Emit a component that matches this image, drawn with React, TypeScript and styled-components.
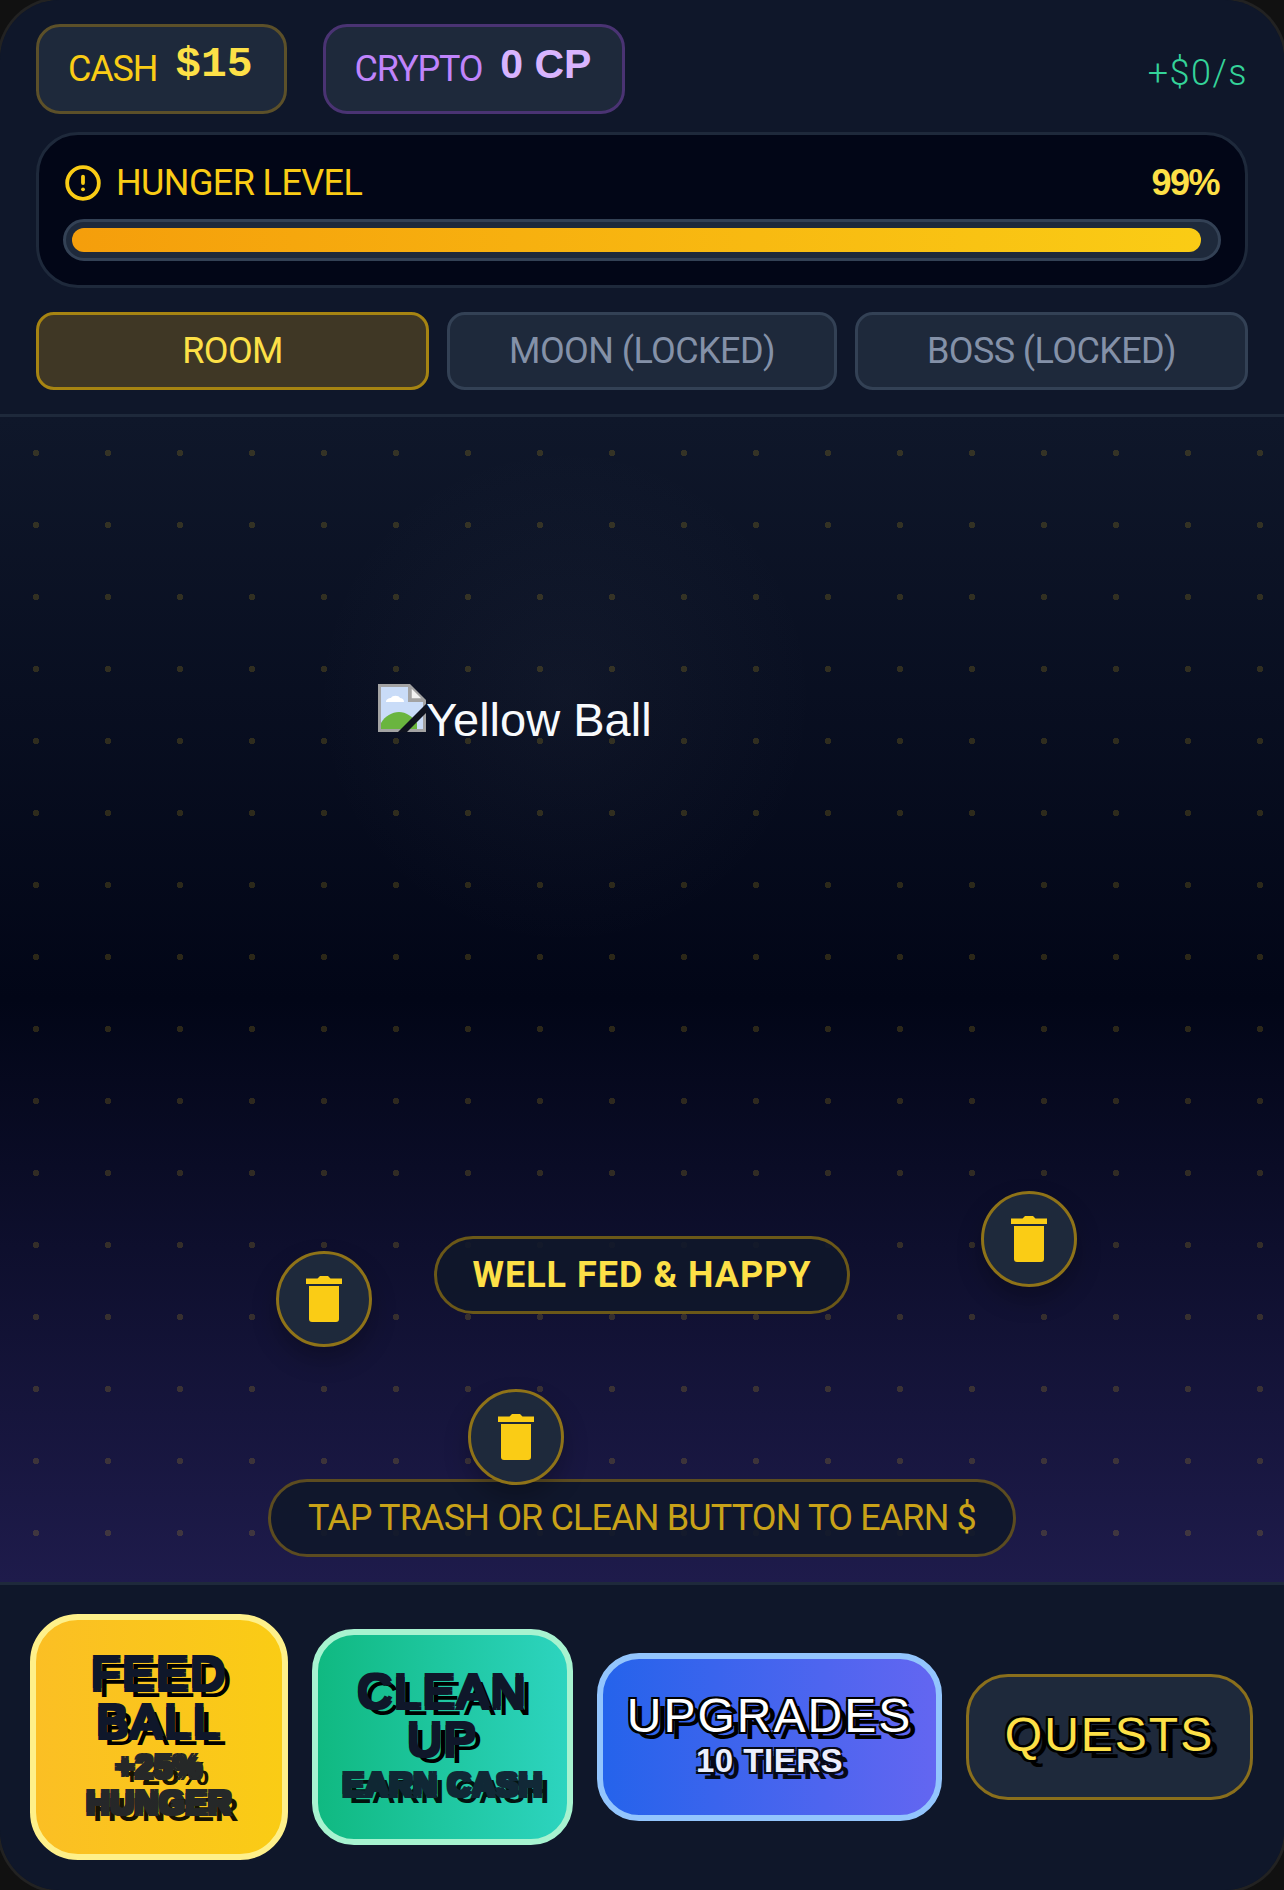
import * as React from 'react';
import styled, { createGlobalStyle } from 'styled-components';
import { CircleAlert } from 'lucide-react';

const GlobalStyle = createGlobalStyle`
    html, body {
        margin: 0;
        padding: 0;
        background: #111111;
    }
    * {
        box-sizing: border-box;
    }
`;

const labelFont = `Roboto, "Liberation Sans", sans-serif`;
const monoFont = `"Liberation Mono", monospace`;
const plainFont = `"Liberation Sans", Arial, sans-serif`;

const Viewport = styled.div`
    width: 1284px;
    height: 1890px;
    overflow: hidden;
    background: #111111;
`;

const Frame = styled.div`
    width: 1284px;
    height: 1890px;
    display: flex;
    flex-direction: column;
    overflow: hidden;
    border-radius: 60px;
    background: #0f172a;
    box-shadow: 0 0 0 3px #222222;
    font-family: ${labelFont};
`;

const Header = styled.header`
    display: flex;
    flex-direction: column;
    padding: 24px 36px;
    background: #0f172a;
    border-bottom: 3px solid #1e293b;
`;

const TopRow = styled.div`
    display: flex;
    align-items: center;
    height: 90px;
    gap: 36px;
`;

const StatPill = styled.div<{ $border: string }>`
    display: flex;
    align-items: center;
    gap: 18px;
    height: 90px;
    padding: 0 31px 0 29px;
    background: #1e293b;
    border: 3px solid ${(props) => props.$border};
    border-radius: 24px;
`;

const StatLabel = styled.span<{ $color: string }>`
    font-size: 36px;
    letter-spacing: -1.2px;
    color: ${(props) => props.$color};
`;

const StatValue = styled.span<{ $color: string; $plain?: boolean }>`
    margin-bottom: 10px;
    font-family: ${(props) => (props.$plain ? plainFont : monoFont)};
    font-size: ${(props) => (props.$plain ? '41px' : '43px')};
    font-weight: 700;
    color: ${(props) => props.$color};
`;

const Rate = styled.span`
    margin-left: auto;
    margin-top: 8px;
    font-size: 36px;
    font-weight: 300;
    letter-spacing: 1.5px;
    color: #34d399;
`;

const HungerCard = styled.section`
    display: flex;
    flex-direction: column;
    height: 156px;
    margin-top: 18px;
    padding: 27px 24px 0;
    background: #020617;
    border: 3px solid #1e293b;
    border-radius: 42px;
`;

const HungerHead = styled.div`
    display: flex;
    align-items: center;
    justify-content: space-between;
    height: 42px;
`;

const HungerLabel = styled.div`
    display: flex;
    align-items: center;
    gap: 14px;
    padding-left: 1px;
    font-size: 36px;
    letter-spacing: -0.6px;
    color: #facc15;
`;

const HungerValue = styled.span`
    padding-right: 2px;
    font-family: ${plainFont};
    font-size: 36px;
    font-weight: 700;
    letter-spacing: -1.5px;
    color: #fde047;
`;

const HungerTrack = styled.div`
    height: 42px;
    margin-top: 15px;
    padding: 6px;
    background: #1e293b;
    border: 3px solid #334155;
    border-radius: 21px;
`;

const HungerFill = styled.div`
    height: 24px;
    border-radius: 12px;
    background: linear-gradient(90deg, #f59e0b, #facc15);
`;

const Tabs = styled.nav`
    display: grid;
    grid-template-columns: 393px 390px 393px;
    gap: 18px;
    margin-top: 24px;
`;

const Tab = styled.div<{ $active?: boolean }>`
    display: flex;
    align-items: center;
    justify-content: center;
    height: 78px;
    font-size: 36px;
    letter-spacing: -0.6px;
    border-radius: 18px;
    border: 3px solid ${(props) => (props.$active ? '#a68412' : '#334155')};
    background: ${(props) => (props.$active ? '#3f3725' : '#1e293b')};
    color: ${(props) => (props.$active ? '#fde047' : '#8491a8')};
`;

const GameArea = styled.main`
    position: relative;
    flex: 1;
    display: flex;
    flex-direction: column;
    align-items: center;
    justify-content: flex-end;
    gap: 165px;
    padding-bottom: 25px;
    background-image:
        radial-gradient(circle, rgba(250, 204, 21, 0.16) 3px, transparent 3.5px),
        radial-gradient(circle at 44% 24%, rgba(148, 163, 184, 0.05), transparent 22%),
        linear-gradient(180deg, #0f172a 0%, #020617 50%, #1e1b4b 100%);
    background-size: 72px 72px, 100% 100%, 100% 100%;
`;

const Ball = styled.div`
    position: absolute;
    left: 378px;
    top: 267px;
    display: flex;
    align-items: flex-start;
    font-family: ${plainFont};
    font-size: 47px;
    line-height: 72px;
    color: #f8fafc;
`;

const BrokenImage = styled.svg`
    display: block;
    width: 48px;
    height: 48px;
`;

const TrashButton = styled.button`
    position: absolute;
    z-index: 2;
    display: flex;
    align-items: center;
    justify-content: center;
    width: 96px;
    height: 96px;
    padding: 0;
    background: #1e293b;
    border: 3px solid #8f7318;
    border-radius: 50%;
    box-shadow: 0 12px 24px rgba(0, 0, 0, 0.25);
`;

const StatusPill = styled.div<{ $dim?: boolean }>`
    display: flex;
    align-items: center;
    justify-content: center;
    height: 78px;
    border-radius: 39px;
    background: rgba(15, 23, 42, 0.9);
    border: 3px solid ${(props) => (props.$dim ? '#5c4c20' : '#6b5818')};
    padding: 0 ${(props) => (props.$dim ? '37px' : '35px')};
    font-size: 36px;
    font-weight: ${(props) => (props.$dim ? 400 : 700)};
    letter-spacing: ${(props) => (props.$dim ? '-0.85px' : '1px')};
    color: ${(props) => (props.$dim ? '#c9a218' : '#fde047')};
`;

const ActionBar = styled.footer`
    display: flex;
    align-items: center;
    gap: 24px;
    height: 308px;
    padding: 0 30px 2px;
    background: #0f172a;
    border-top: 3px solid #1e293b;
`;

const ActionButton = styled.button<{ $w: number; $h: number; $bg: string; $border: string; $ink: string; $edge: string; $bw: number; $r: number }>`
    flex: none;
    display: flex;
    flex-direction: column;
    align-items: center;
    justify-content: center;
    width: ${(props) => props.$w}px;
    height: ${(props) => props.$h}px;
    padding: 0 24px 3px;
    background: ${(props) => props.$bg};
    border: ${(props) => props.$bw}px solid ${(props) => props.$border};
    border-radius: ${(props) => props.$r}px;
    font-family: ${plainFont};
    text-align: center;
    color: ${(props) => props.$ink};
    text-shadow:
        -2px -2px 0 ${(props) => props.$edge},
        2px -2px 0 ${(props) => props.$edge},
        -2px 2px 0 ${(props) => props.$edge},
        2px 2px 0 ${(props) => props.$edge},
        7px 7px 0 #000000;
`;

const ActionTitle = styled.span`
    font-size: 48px;
    line-height: 48px;
    letter-spacing: 2px;
`;

const ActionSub = styled.span`
    margin-top: 3px;
    font-size: 33px;
    font-weight: 700;
    line-height: 36px;
    letter-spacing: 0.5px;
    opacity: 0.9;
`;

const TrashIcon = () => (
    <svg width="36" height="46" viewBox="0 0 36 46" fill="#facc15">
        <path d="M0 2.5h11.5L14 0h8l2.5 2.5H36V8H0z" />
        <path d="M3 10h30v33a3 3 0 0 1-3 3H6a3 3 0 0 1-3-3z" />
    </svg>
);

const BrokenIcon = () => (
    <BrokenImage viewBox="0 0 48 48">
        <path fill="#a3a3a3" d="M0 0h32l16 16v32H0z" />
        <path fill="#c9dcf8" d="M3 3h27v15h15v27H3z" />
        <path fill="#ffffff" d="M8 18c0-3 3-4 5-4 1-3 8-3 9 0 2 0 4 1 4 4z" />
        <path fill="#f2f2f2" stroke="#a3a3a3" strokeWidth="1.5" d="M33 3l12 12H33z" />
        <path fill="#6ab53f" d="M3 45v-6c4-7 11-11 18-11s13 4 18 11v6z" />
        <path fill="#0f131f" d="M20 48l28-28v9L29 48z" />
    </BrokenImage>
);

const trashSpots = [
    { left: 276, top: 834 },
    { left: 981, top: 774 },
    { left: 468, top: 972 },
];

const App = (): JSX.Element => {
    return (
        <Viewport>
            <GlobalStyle />
            <Frame>
                <Header>
                    <TopRow>
                        <StatPill $border="#5c5029">
                            <StatLabel $color="#facc15">CASH</StatLabel>
                            <StatValue $color="#fde047">$15</StatValue>
                        </StatPill>
                        <StatPill $border="#4a3373">
                            <StatLabel $color="#c084fc">CRYPTO</StatLabel>
                            <StatValue $color="#d8b4fe" $plain>0 CP</StatValue>
                        </StatPill>
                        <Rate>+$0/s</Rate>
                    </TopRow>
                    <HungerCard>
                        <HungerHead>
                            <HungerLabel>
                                <CircleAlert size={38} strokeWidth={2.4} />
                                HUNGER LEVEL
                            </HungerLabel>
                            <HungerValue>99%</HungerValue>
                        </HungerHead>
                        <HungerTrack>
                            <HungerFill style={{ width: '99%' }} />
                        </HungerTrack>
                    </HungerCard>
                    <Tabs>
                        <Tab $active>ROOM</Tab>
                        <Tab>MOON (LOCKED)</Tab>
                        <Tab>BOSS (LOCKED)</Tab>
                    </Tabs>
                </Header>
                <GameArea>
                    <Ball>
                        <BrokenIcon />
                        Yellow Ball
                    </Ball>
                    {trashSpots.map((spot) => (
                        <TrashButton key={spot.left} style={{ left: spot.left, top: spot.top }}>
                            <TrashIcon />
                        </TrashButton>
                    ))}
                    <StatusPill>WELL FED &amp; HAPPY</StatusPill>
                    <StatusPill $dim>TAP TRASH OR CLEAN BUTTON TO EARN $</StatusPill>
                </GameArea>
                <ActionBar>
                    <ActionButton $w={258} $h={246} $bw={6} $r={48} $bg="linear-gradient(90deg, #fbbf24, #facc15)" $border="#fef08a" $ink="#0f172a" $edge="#0f172a">
                        <ActionTitle>FEED BALL</ActionTitle>
                        <ActionSub>+25% HUNGER</ActionSub>
                    </ActionButton>
                    <ActionButton $w={261} $h={216} $bw={6} $r={42} $bg="linear-gradient(90deg, #10b981, #2dd4bf)" $border="#a7f3d0" $ink="#0f172a" $edge="#0f172a">
                        <ActionTitle>CLEAN UP</ActionTitle>
                        <ActionSub>EARN CASH</ActionSub>
                    </ActionButton>
                    <ActionButton $w={345} $h={168} $bw={6} $r={42} $bg="linear-gradient(90deg, #2563eb, #6366f1)" $border="#93c5fd" $ink="#ffffff" $edge="#000000">
                        <ActionTitle>UPGRADES</ActionTitle>
                        <ActionSub>10 TIERS</ActionSub>
                    </ActionButton>
                    <ActionButton $w={287} $h={126} $bw={3} $r={42} $bg="#1e293b" $border="#8a6f1c" $ink="#fde047" $edge="#000000">
                        <ActionTitle>QUESTS</ActionTitle>
                    </ActionButton>
                </ActionBar>
            </Frame>
        </Viewport>
    );
};

export default App;
